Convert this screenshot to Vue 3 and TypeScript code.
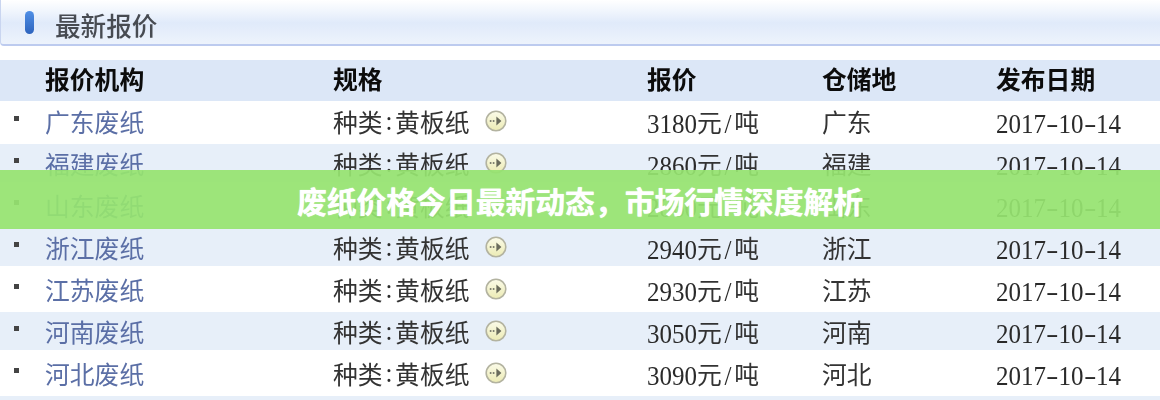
<script setup lang="ts">
interface Row { org: string; price: string; place: string }
const rows: Row[] = [
  { org: '广东废纸', price: '3180', place: '广东' },
  { org: '福建废纸', price: '2860', place: '福建' },
  { org: '山东废纸', price: '2860', place: '山东' },
  { org: '浙江废纸', price: '2940', place: '浙江' },
  { org: '江苏废纸', price: '2930', place: '江苏' },
  { org: '河南废纸', price: '3050', place: '河南' },
  { org: '河北废纸', price: '3090', place: '河北' },
]
const date = '2017-10-14'.split('')
function rowClass(i: number): string {
  if (i === 0) return 'first'
  return i % 2 === 1 ? 'tint' : 'plain'
}
</script>

<template>
  <div class="page" lang="zh-CN">
    <div class="shot">
      <header class="title-bar">
        <span class="pill"></span>
        <h2 class="title">最新报价</h2>
      </header>
      <div class="table">
        <div class="row head">
          <span></span>
          <span>报价机构</span>
          <span>规格</span>
          <span>报价</span>
          <span>仓储地</span>
          <span>发布日期</span>
        </div>
        <div v-for="(r, i) in rows" :key="r.org" class="row" :class="rowClass(i)">
          <span class="bullet-cell"><i class="bullet"></i></span>
          <span class="link">{{ r.org }}</span>
          <span class="spec">
            种类<b class="cell">:</b>黄板纸
            <svg class="go" width="24" height="24" viewBox="0 0 24 24" aria-hidden="true">
              <defs>
                <linearGradient id="goFill" x1="0" y1="0" x2="0" y2="1">
                  <stop offset="0" stop-color="#fbfbe9" />
                  <stop offset="1" stop-color="#ecebb4" />
                </linearGradient>
              </defs>
              <circle cx="12" cy="12" r="9.8" fill="url(#goFill)" stroke="#b3b3a0" stroke-width="1.6" />
              <circle cx="6.6" cy="12" r="1" fill="#77786a" />
              <circle cx="9.6" cy="12" r="1" fill="#77786a" />
              <path d="M12.4 7.6 L17.4 12 L12.4 16.4 Z" fill="#6a6b5c" />
            </svg>
          </span>
          <span class="latin">
            <b v-for="(c, k) in r.price.split('')" :key="k" class="cell">{{ c }}</b>元<b class="cell">/</b>吨
          </span>
          <span>{{ r.place }}</span>
          <span class="latin"><b v-for="(c, k) in date" :key="k" class="cell" :class="{ dash: c === '-' }">{{ c }}</b></span>
        </div>
        <div class="row tint tail"></div>
      </div>
      <div class="banner">废纸价格今日最新动态，市场行情深度解析</div>
    </div>
  </div>
</template>

<style scoped>
.page {
  width: 1160px;
  height: 400px;
  overflow: hidden;
  background: #fff;
}
.shot {
  position: relative;
  height: 400px;
  overflow: hidden;
  font-family: "Noto Sans CJK SC", "Liberation Sans", sans-serif;
  font-size: 24.8px;
  color: #333;
}
.title-bar {
  display: flex;
  align-items: center;
  height: 46px;
  box-sizing: border-box;
  padding-left: 24px;
  border-left: 1px solid #c9d5f0;
  border-bottom: 2px solid #bdcbef;
  border-bottom-left-radius: 4px;
  background: linear-gradient(180deg, #ffffff 0%, #f1f6fd 24%, #e0eafa 52%, #edf3fc 100%);
  filter: blur(0.6px);
}
.pill {
  width: 9px;
  height: 23px;
  border-radius: 4.5px;
  background: linear-gradient(180deg, #4f8fe6 0%, #2d63bd 100%);
}
.title {
  margin: 6px 0 0 21px;
  font-size: 25.6px;
  font-weight: 500;
  line-height: 40px;
  color: #474b52;
}
.table {
  margin-top: 14px;
  filter: blur(0.6px);
}
.row {
  display: grid;
  grid-template-columns: 45px 288px 314px 175px 174px 1fr;
  box-sizing: border-box;
  line-height: 34px;
  white-space: nowrap;
}
.head {
  height: 41px;
  background: #dce7f7;
  color: #0c0c0c;
  font-weight: 700;
  line-height: 36px;
}
.first {
  height: 43px;
  padding-top: 3px;
  background: #fff;
}
.tint {
  height: 38px;
  padding-top: 2px;
  background: #e7eff9;
}
.plain {
  height: 46px;
  padding-top: 6px;
  background: #fff;
}
.tail {
  height: 10px;
  padding: 0;
}
.bullet-cell {
  display: flex;
  align-items: center;
  padding-left: 14px;
  height: 28px;
}
.bullet {
  width: 5px;
  height: 5px;
  background: #444;
}
.link {
  color: #5b6fa6;
}
.spec {
  display: flex;
  align-items: center;
  height: 34px;
}
.go {
  margin-left: 14px;
}
.cell {
  display: inline-block;
  width: 12.5px;
  text-align: center;
  font-weight: 400;
  font-family: "Liberation Serif", serif;
  font-size: 25px;
  color: #2a2a2a;
  transform: scaleY(1.12);
}
.dash {
  transform: scaleX(1.5);
}
.latin {
  font-family: "Noto Sans CJK SC", sans-serif;
}
.banner {
  position: absolute;
  left: 0;
  right: 0;
  top: 170px;
  height: 59px;
  line-height: 61px;
  text-align: center;
  background: rgba(150, 227, 112, 0.93);
  color: #fff;
  font-size: 29.8px;
  font-weight: 700;
  text-shadow: 0 0 1px #fff;
}
</style>
